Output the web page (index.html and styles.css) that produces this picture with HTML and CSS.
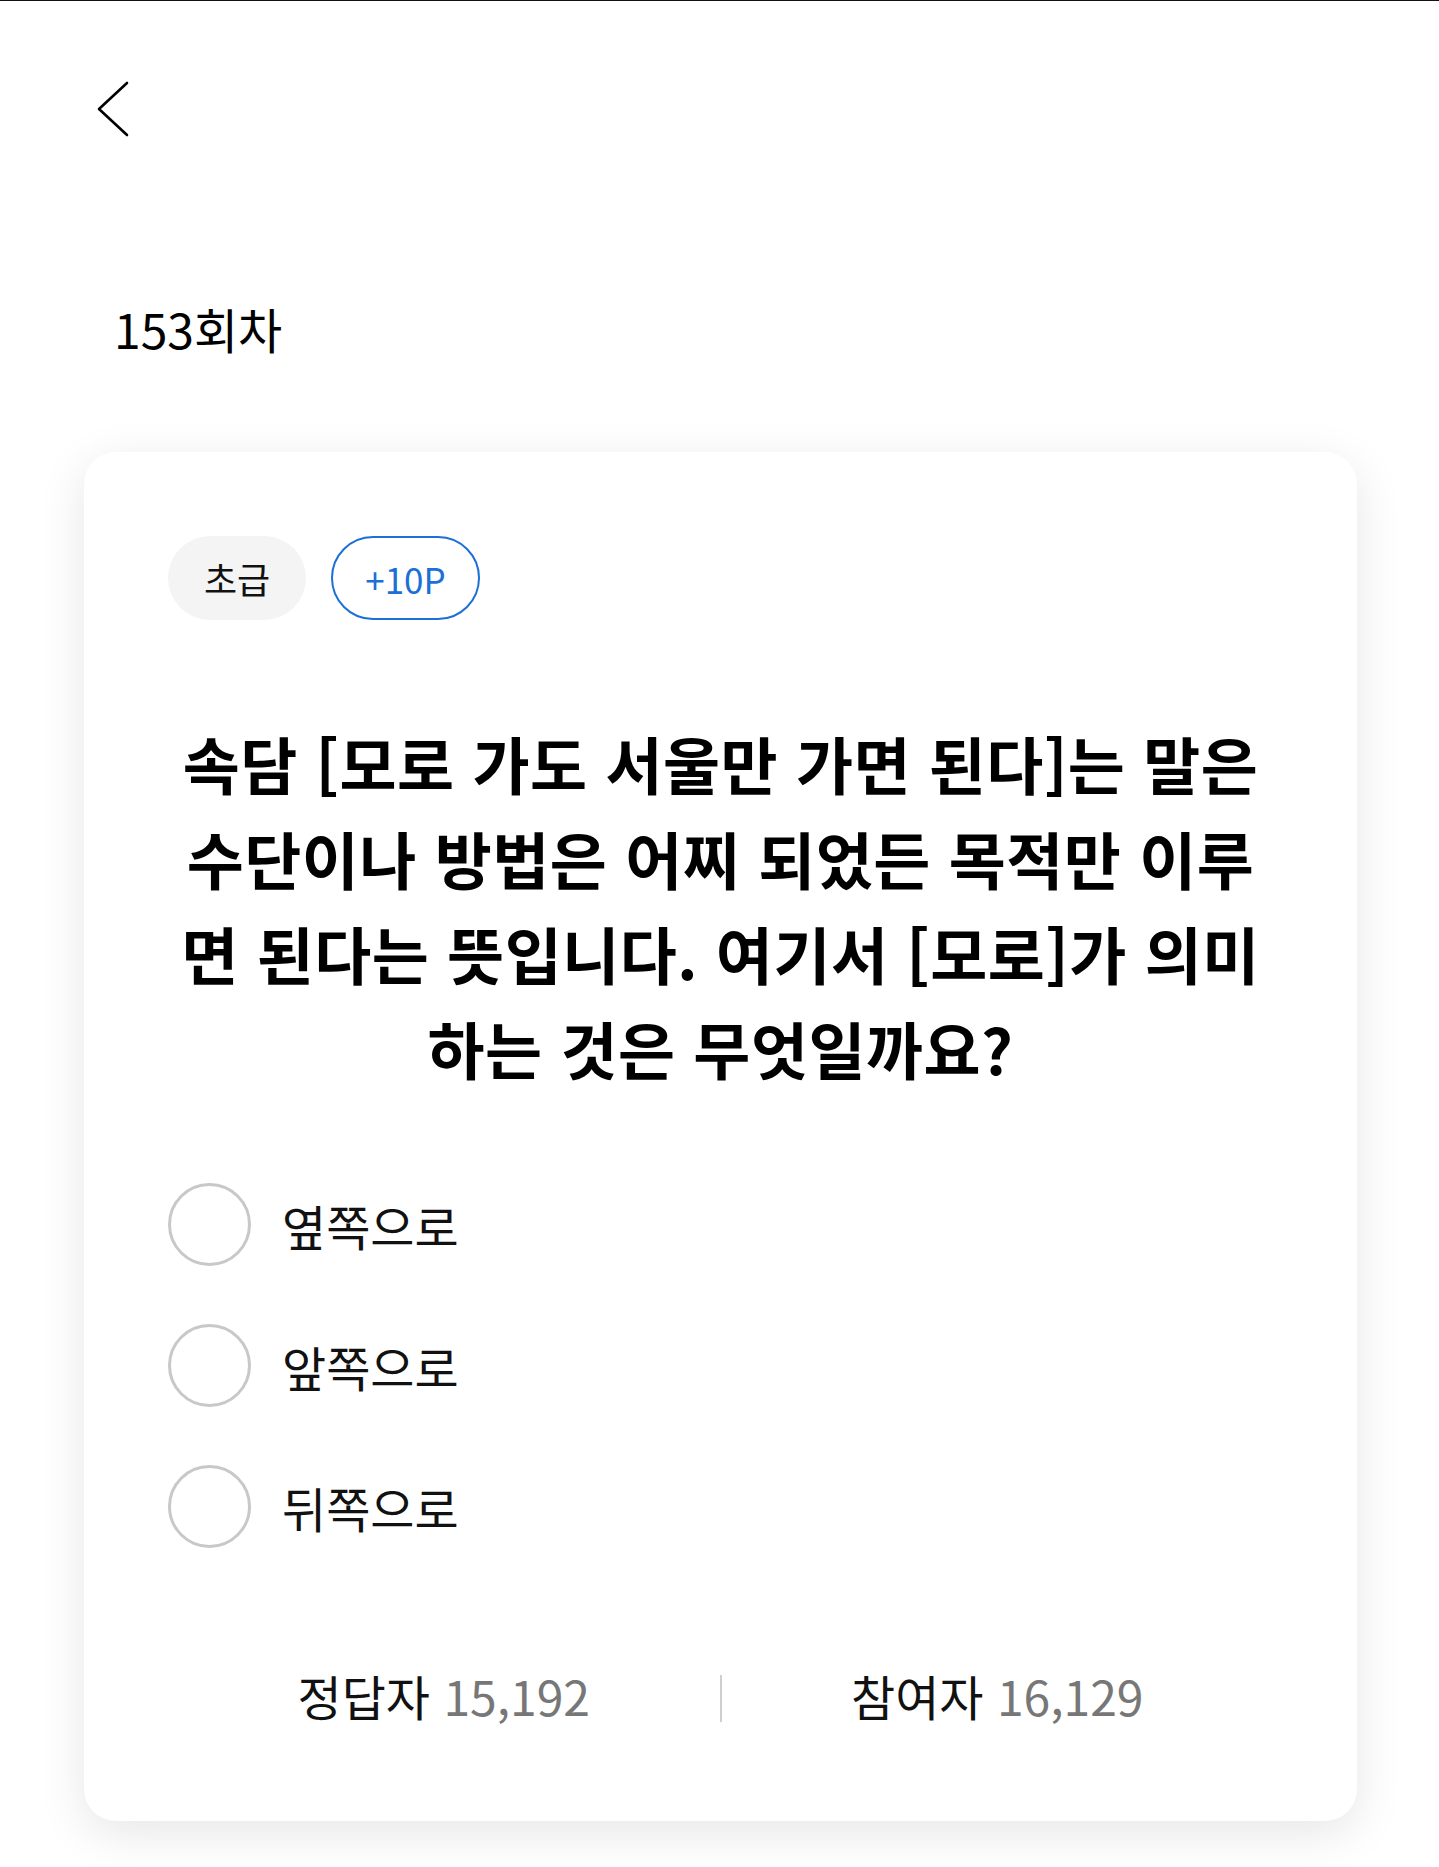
FILE: index.html
```html
<!DOCTYPE html>
<html lang="ko">
<head>
<meta charset="utf-8">
<title>153회차 퀴즈</title>
<link rel="stylesheet" href="styles.css">
</head>
<body>
<div class="page">
  <header class="topbar">
    <a class="back" href="#" aria-label="뒤로">
      <svg width="32" height="56" viewBox="0 0 32 56" aria-hidden="true">
        <polyline points="30,2 2,28 30,54" fill="none" stroke="#000" stroke-width="2.6" stroke-linecap="round" stroke-linejoin="round"/>
      </svg>
    </a>
  </header>
  <h1 class="round">153회차</h1>
  <section class="card">
    <div class="tags">
      <span class="tag tag-level">초급</span>
      <span class="tag tag-point">+10P</span>
    </div>
    <p class="question">속담 [모로 가도 서울만 가면 된다]는 말은 수단이나 방법은 어찌 되었든 목적만 이루면 된다는 뜻입니다. 여기서 [모로]가 의미하는 것은 무엇일까요?</p>
    <ul class="options">
      <li class="option"><span class="radio"></span><span class="option-label">옆쪽으로</span></li>
      <li class="option"><span class="radio"></span><span class="option-label">앞쪽으로</span></li>
      <li class="option"><span class="radio"></span><span class="option-label">뒤쪽으로</span></li>
    </ul>
    <div class="stats">
      <div class="stat"><span class="stat-label">정답자</span> <span class="stat-num">15,192</span></div>
      <span class="divider"></span>
      <div class="stat"><span class="stat-label">참여자</span> <span class="stat-num">16,129</span></div>
    </div>
  </section>
</div>
</body>
</html>
```
FILE: styles.css
```css
* { box-sizing: border-box; }
html, body { margin: 0; padding: 0; background: #fff; }
body {
  font-family: "Noto Sans CJK KR", "Noto Sans", sans-serif;
  color: #000;
  border-top: 1px solid #111;
}
.page {
  padding: 0 82px 60px 84px;
}
.topbar {
  height: 216px;
  padding-top: 80px;
}
.back {
  display: inline-block;
  margin-left: 13px;
  width: 32px;
  height: 56px;
}
.back svg { display: block; }
.round {
  margin: 87px 0 100px 30px;
  height: 48px;
  font-size: 48px;
  line-height: 48px;
  font-weight: 400;
  letter-spacing: 0;
}
.card {
  background: #fff;
  border-radius: 32px;
  box-shadow: 0 12px 48px rgba(0, 0, 0, 0.1);
  padding: 84px 84px 93px;
}
.tags {
  display: flex;
  gap: 25px;
}
.tag {
  height: 84px;
  border-radius: 42px;
  padding: 0 36px;
  display: inline-flex;
  align-items: center;
  font-size: 36px;
}
.tag-level {
  background: #f4f4f4;
  color: #111;
}
.tag-point {
  border: 2.5px solid #1b6fd6;
  color: #1b6fd6;
  padding: 0 32px;
  font-size: 35px;
}
.question {
  margin: 96px 0 0;
  text-align: center;
  font-size: 62px;
  line-height: 95px;
  font-weight: 700;
  letter-spacing: 0.5px;
}
.options {
  list-style: none;
  margin: 87px 0 0;
  padding: 0;
  display: flex;
  flex-direction: column;
  gap: 58px;
}
.option {
  display: flex;
  align-items: center;
  gap: 31px;
  height: 83px;
}
.radio {
  width: 83px;
  height: 83px;
  border-radius: 50%;
  border: 3px solid #c8c8c8;
  flex: none;
}
.option-label {
  font-size: 48px;
  color: #111;
}
.stats {
  margin-top: 120px;
  display: flex;
  align-items: center;
  height: 60px;
}
.stat {
  flex: 1;
  text-align: center;
  font-size: 48px;
  line-height: 60px;
  padding-bottom: 7px;
}
.stat-label { color: #111; }
.stat-num { color: #777; }
.divider {
  width: 2px;
  height: 47px;
  background: #cfcfcf;
  flex: none;
}
```
